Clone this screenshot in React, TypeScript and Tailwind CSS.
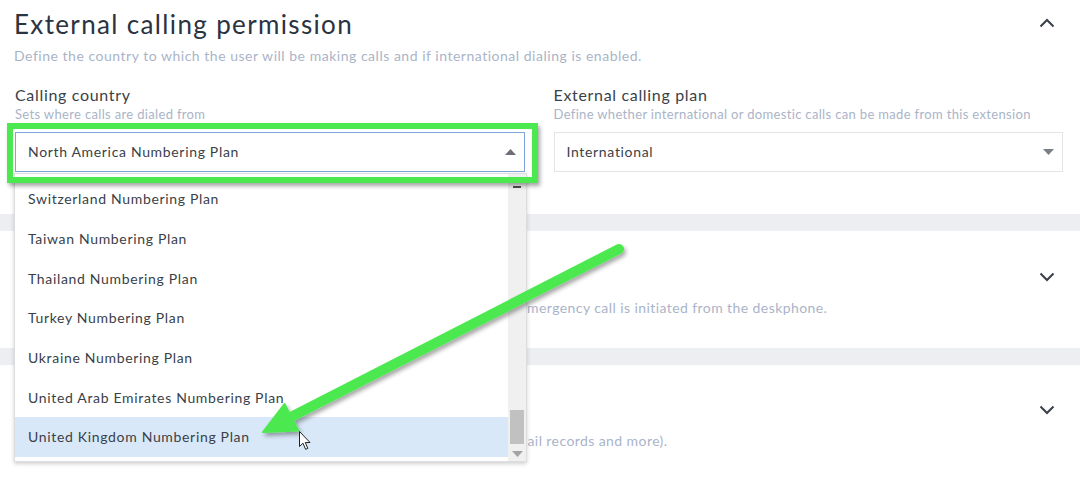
import * as React from 'react';

const countries = [
  'Switzerland Numbering Plan',
  'Taiwan Numbering Plan',
  'Thailand Numbering Plan',
  'Turkey Numbering Plan',
  'Ukraine Numbering Plan',
  'United Arab Emirates Numbering Plan',
  'United Kingdom Numbering Plan',
];

const Chevron = ({ up }: { up?: boolean }) => (
  <svg width="16" height="10" viewBox="0 0 16 10" className="shrink-0">
    <polyline
      points={up ? '1.5,8.5 8,2 14.5,8.5' : '1.5,1.5 8,8 14.5,1.5'}
      fill="none"
      stroke="#3a3f48"
      strokeWidth="2"
    />
  </svg>
);

const Caret = ({ up, color }: { up?: boolean; color: string }) => (
  <svg width="11" height="6" viewBox="0 0 11 6">
    <polygon points={up ? '0,6 5.5,0 11,6' : '0,0 5.5,6 11,0'} fill={color} />
  </svg>
);

const Field = ({
  label,
  hint,
  value,
  active,
}: {
  label: string;
  hint: string;
  value: string;
  active?: boolean;
}) => (
  <div className="flex flex-col">
    <div className="text-[16px] leading-[20px] text-[#3a3f48]">{label}</div>
    <div className="mt-[1px] text-[13px] leading-[16px] text-[#aab4c8] whitespace-nowrap tracking-[0.026em]">{hint}</div>
    <div
      className={`mt-[10px] h-[40px] flex items-center justify-between pl-[12px] pr-[8px] bg-white border ${
        active ? 'border-[#7ea6dd]' : 'border-[#e2e4e8]'
      }`}
    >
      <span className="text-[14px] text-[#3a3f48] -mt-[2px]">{value}</span>
      <Caret up={active} color={active ? '#6b6f76' : '#7b7f86'} />
    </div>
  </div>
);

export default function App() {
  return (
    <div className="relative w-[1080px] h-[477px] overflow-hidden bg-white font-['Lato',sans-serif] tracking-[0.042em]">
      {/* External calling permission */}
      <section className="h-[214px] pl-[14px] pr-[17px] pt-[8px]">
        <div className="flex items-start justify-between pr-[8px]">
          <div>
            <h2 className="text-[26px] leading-[32px] text-[#2b3240] tracking-[0.052em]">External calling permission</h2>
            <p className="mt-[6px] text-[14px] leading-[20px] text-[#aab4c8] tracking-[0.037em]">
              Define the country to which the user will be making calls and if international dialing is enabled.
            </p>
          </div>
          <div className="pt-[10px]">
            <Chevron up />
          </div>
        </div>
        <div className="mt-[19px] grid grid-cols-2 gap-[29px] pl-[1px]">
          <Field
            label="Calling country"
            hint="Sets where calls are dialed from"
            value="North America Numbering Plan"
            active
          />
          <Field
            label="External calling plan"
            hint="Define whether international or domestic calls can be made from this extension"
            value="International"
          />
        </div>
      </section>

      <div className="h-[17px] bg-[#eceef1]" />

      {/* Emergency calling */}
      <section className="h-[117px] pl-[14px] pr-[25px] pt-[31px]">
        <div className="h-[30px] flex items-center justify-end">
          <Chevron />
        </div>
        <p className="mt-[6px] text-[14px] leading-[20px] text-[#aab4c8] whitespace-nowrap tracking-[0.03em]">
          Set the emergency address that will be displayed to first responders when an emergency call is initiated from the deskphone.
        </p>
      </section>

      <div className="h-[17px] bg-[#eceef1]" />

      {/* Privacy */}
      <section className="pl-[14px] pr-[25px] pt-[30px]">
        <div className="h-[30px] flex items-center justify-end">
          <Chevron />
        </div>
        <p className="mt-[6px] text-[14px] leading-[20px] text-[#aab4c8] whitespace-nowrap tracking-[0.03em]">
          Manage what information is shared with your team admins (call history, voicemail records and more).
        </p>
      </section>

      {/* Open dropdown list */}
      <div className="absolute left-[14px] top-[173px] w-[513px] h-[289px] flex bg-white border border-[#dcdde0] shadow-[0_2px_4px_rgba(0,0,0,0.18)] overflow-hidden">
        <ul className="flex-1 pt-[5px]">
          {countries.map((c) => (
            <li
              key={c}
              className={`h-[39.67px] flex items-center pl-[13px] text-[14px] text-[#3a3f48] ${
                c.startsWith('United Kingdom') ? 'bg-[#d9e8f8]' : ''
              }`}
            >
              {c}
            </li>
          ))}
        </ul>
        <div className="w-[18px] bg-[#f0f0f0] flex flex-col items-center">
          <div className="mt-[12px] w-[8px] h-[2px] bg-[#505050]" />
          <div className="mt-[222px] w-[14px] h-[34px] bg-[#c1c1c1]" />
          <div className="mt-[7px]">
            <Caret color="#a3a3a3" />
          </div>
        </div>
      </div>

      {/* Green highlight box */}
      <div className="absolute left-[7px] top-[123px] w-[531px] h-[60px] border-[6px] border-[#4ce850] shadow-[2px_3px_4px_rgba(0,0,0,0.35)]" />

      {/* Green arrow */}
      <svg className="absolute inset-0 pointer-events-none" width="1080" height="477">
        <defs>
          <filter id="sh" x="-10%" y="-10%" width="130%" height="130%">
            <feDropShadow dx="2" dy="3" stdDeviation="2" floodColor="#000" floodOpacity="0.35" />
          </filter>
        </defs>
        <g filter="url(#sh)">
          <line x1="619" y1="249" x2="289" y2="418" stroke="#4ce850" strokeWidth="10" strokeLinecap="round" />
          <polygon points="263,432 284.5,404 298.3,430.6" fill="#4ce850" stroke="#4ce850" strokeWidth="2" strokeLinejoin="round" />
        </g>
      </svg>

      {/* Mouse pointer */}
      <svg className="absolute left-[299px] top-[431px]" width="13" height="20" viewBox="0 0 13 20">
        <path d="M0.5 0.5 L0.5 15.5 L4 12.2 L6.6 18.3 L8.8 17.4 L6.3 11.5 L11 11.5 Z" fill="#fff" stroke="#222" strokeWidth="1" strokeLinejoin="round" />
      </svg>
    </div>
  );
}
